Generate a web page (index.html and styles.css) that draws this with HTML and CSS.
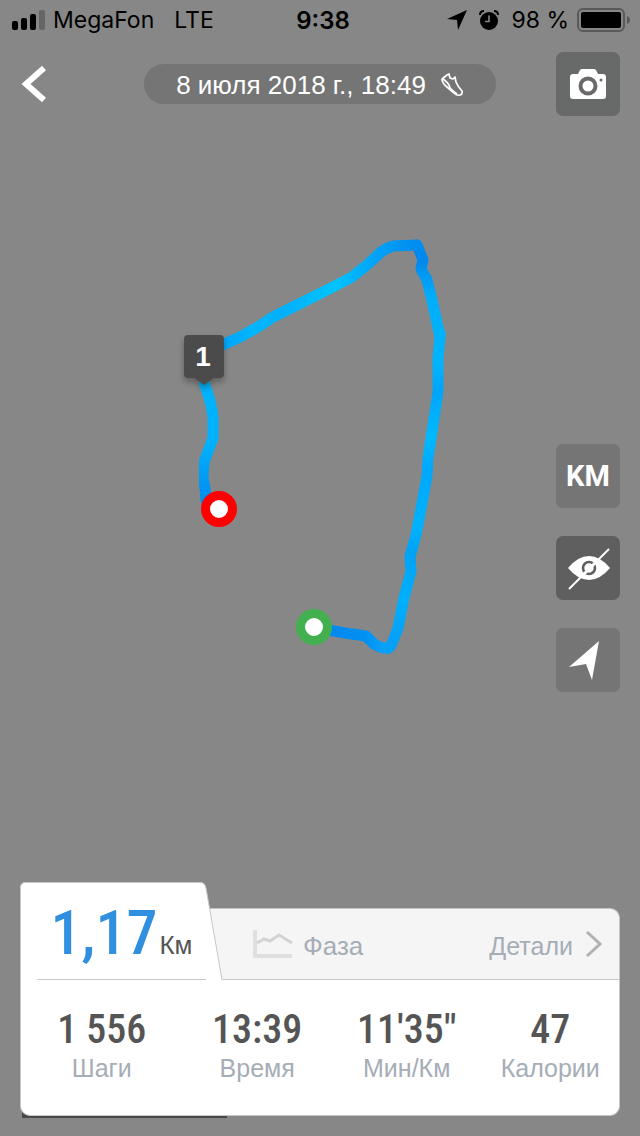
FILE: index.html
```
<!DOCTYPE html>
<html lang="ru">
<head>
    <meta charset="UTF-8">
    <meta name="viewport" content="width=device-width, initial-scale=1.0">
    <title>Тренировка</title>
    <link rel="stylesheet" href="styles.css">
</head>
<body>
    <svg class="map" viewBox="0 0 640 1136" preserveAspectRatio="xMidYMin slice" aria-hidden="true">
        <defs>
            <linearGradient id="east" gradientUnits="userSpaceOnUse" x1="0" y1="650" x2="0" y2="240">
                <stop offset="0" stop-color="#0a9bf5"/>
                <stop offset="0.12" stop-color="#00b0fc"/>
                <stop offset="0.24" stop-color="#00a2f6"/>
                <stop offset="0.3" stop-color="#00b2fc"/>
                <stop offset="0.44" stop-color="#00a8fa"/>
                <stop offset="0.52" stop-color="#00b9ff"/>
                <stop offset="0.63" stop-color="#00a5f8"/>
                <stop offset="0.7" stop-color="#00b4fd"/>
                <stop offset="0.86" stop-color="#00aefb"/>
                <stop offset="0.95" stop-color="#0089ee"/>
                <stop offset="1" stop-color="#008cf0"/>
            </linearGradient>
            <linearGradient id="north" gradientUnits="userSpaceOnUse" x1="418" y1="0" x2="224" y2="0">
                <stop offset="0" stop-color="#008cf0"/>
                <stop offset="0.2" stop-color="#00a0f6"/>
                <stop offset="0.43" stop-color="#00c3ff"/>
                <stop offset="0.7" stop-color="#00b0fc"/>
                <stop offset="0.85" stop-color="#00b6fd"/>
                <stop offset="1" stop-color="#00a5fa"/>
            </linearGradient>
            <linearGradient id="west" gradientUnits="userSpaceOnUse" x1="0" y1="384" x2="0" y2="508">
                <stop offset="0" stop-color="#00b4fd"/>
                <stop offset="0.5" stop-color="#00b0fc"/>
                <stop offset="1" stop-color="#0089ee"/>
            </linearGradient>
            <linearGradient id="start" gradientUnits="userSpaceOnUse" x1="330" y1="0" x2="398" y2="0">
                <stop offset="0" stop-color="#0088ee"/>
                <stop offset="0.5" stop-color="#0090f2"/>
                <stop offset="0.8" stop-color="#0aa0f8"/>
                <stop offset="1" stop-color="#00a2f8"/>
            </linearGradient>
            <filter id="shade" x="-30%" y="-30%" width="160%" height="160%">
                <feDropShadow dx="0" dy="4" stdDeviation="3" flood-opacity="0.3"/>
            </filter>
            <clipPath id="tile"><path d="M199 330h250v330H199z"/></clipPath>
        </defs>
        <g class="route" clip-path="url(#tile)">
            <path stroke="url(#east)" d="M388 648Q391 647 393 641L398 628L404 598L411 571L410 557L416 535L423 498L427 476L428 458L433 425L438 392L438 358L440 337L440 325"/>
            <path stroke="url(#west)" d="M202 378Q212 402 213 418L213 438L204 462L203 478L205 488L206 500L215 508"/>
            <path stroke="url(#start)" d="M328 630L345 633L366 636L374 644Q382 649 389 648"/>
        </g>
        <g class="route">
            <path stroke="url(#east)" d="M440 337L432 300L427 280L421 269L423 260L417 245"/>
            <path stroke="url(#north)" d="M417 245L393 246Q384 249 380 253L367 265L352 277L333 287L303 302L273 317L258 327L240 337L220 346"/>
        </g>
        <g filter="url(#shade)">
            <path fill="#4c4c4c" d="M188 335h32a4 4 0 0 1 4 4v35a4 4 0 0 1-4 4h-6l-10 7-10-7h-6a4 4 0 0 1-4-4v-35a4 4 0 0 1 4-4z"/>
        </g>
        <text class="marker" x="203" y="366">1</text>
        <circle cx="219" cy="509" r="13.5" fill="#fff" stroke="#f00" stroke-width="9"/>
        <circle cx="314" cy="627" r="13.5" fill="#fff" stroke="#43b04f" stroke-width="9"/>
        <path fill="#484848" d="M22 1112h205v6H22z"/>
    </svg>

    <div class="status">
        <div class="carrier">
            <svg width="33" height="20" viewBox="0 0 33 20">
                <rect x="0" y="11" width="6" height="9" rx="2"/>
                <rect x="9" y="8" width="6" height="12" rx="2"/>
                <rect x="18" y="4" width="6" height="16" rx="2"/>
                <rect x="27" y="0" width="6" height="20" rx="2" opacity="0.25"/>
            </svg>
            <span>MegaFon</span>
            <span class="network">LTE</span>
        </div>
        <div class="clock">9:38</div>
        <div class="power">
            <svg width="20" height="20" viewBox="0 0 20 20"><path d="M20 0L11 20L10 10L0 9z"/></svg>
            <svg class="alarm" width="20" height="20" viewBox="0 0 20 20">
                <circle cx="10" cy="11" r="9"/>
                <path d="M1 5Q1 1 5 1M19 5Q19 1 15 1" fill="none" stroke="#000" stroke-width="2"/>
                <path d="M10 5.500v6H6" fill="none" stroke="#878787" stroke-width="1.600"/>
            </svg>
            <span>98 %</span>
            <svg class="battery" width="53" height="24" viewBox="0 0 53 24">
                <rect x="1" y="1" width="46" height="22" rx="5" fill="none" stroke="#5a5a5a" stroke-width="2"/>
                <rect x="4" y="4" width="40" height="16" rx="2"/>
                <path d="M50 8q3 1 3 4t-3 4z" fill="#5a5a5a"/>
            </svg>
        </div>
    </div>

    <header>
        <button class="back" type="button" aria-label="Назад">
            <svg width="28" height="40" viewBox="0 0 28 40"><path d="M24 4L6 20L24 36" fill="none" stroke="#fff" stroke-width="6"/></svg>
        </button>
        <div class="date">
            <span>8 июля 2018 г., 18:49</span>
            <svg width="24" height="24" viewBox="0 0 24 24" fill="none" stroke="#fff" stroke-width="1.700" stroke-linejoin="round">
                <path d="M2 6L7 2L9 1L10 5L13 6L15 4L16 9Q18 14 22 18Q23 21 20 22Q17 23 14 20L7 14Q2 10 2 6z"/>
                <path d="M3 6Q9 10 10 15Q14 19 17 21"/>
            </svg>
        </div>
        <button class="tool camera" type="button" aria-label="Камера">
            <svg width="38" height="32" viewBox="0 0 38 32">
                <path fill="#fff" d="M4 6h5l2-4q1-1 2-1h12q1 0 2 1l2 4h5q3 0 3 3v19q0 3-3 3H4q-3 0-3-3V9q0-3 3-3z"/>
                <circle cx="19" cy="18" r="7.500" fill="#fff" stroke="#686a69" stroke-width="4"/>
                <circle cx="32" cy="12" r="1.500" fill="#686a69"/>
            </svg>
        </button>
    </header>

    <main>
        <button class="tool" type="button">KM</button>
        <button class="tool active" type="button" aria-label="Скрыть карту">
            <svg width="44" height="44" viewBox="0 0 44 44">
                <path fill="#fff" d="M2 22Q12 10 23 10T44 22Q34 34 23 34T2 22z"/>
                <circle cx="23" cy="22" r="6" fill="none" stroke="#5f5f5f" stroke-width="2.600"/>
                <path d="M15 31L31 15" stroke="#fff" stroke-width="3"/>
                <path d="M3 43L43 3" stroke="#fff" stroke-width="2"/>
            </svg>
        </button>
        <button class="tool" type="button" aria-label="Моё местоположение">
            <svg width="40" height="40" viewBox="0 0 40 40"><path fill="#fff" d="M31 1L24 40L18 24L1 27z"/></svg>
        </button>
    </main>

    <section class="card">
        <div class="tabs">
            <div class="distance">
                <svg class="shape" width="204" height="98" viewBox="0 0 204 98">
                    <path fill="#fff" d="M0 98V6Q0 0 6 0H180Q185 0 186 6L202 98z"/>
                    <path fill="none" stroke="#c4c6c8" d="M0.500 98V6Q0.500 0.500 6 0.500H180Q185 0.500 186 6L202 97.500H204"/>
                </svg>
                <p><strong>1,17</strong><span>Км</span></p>
            </div>
            <nav>
                <a class="phase" href="#">
                    <svg width="40" height="30" viewBox="0 0 40 30" fill="none">
                        <path d="M2 1V27H39" stroke="#dedfe0" stroke-width="4"/>
                        <path d="M4 14L11 10L17 12L26 6L39 14" stroke="#d2d3d4" stroke-width="3"/>
                    </svg>
                    <span>Фаза</span>
                </a>
                <a class="details" href="#">
                    <span>Детали</span>
                    <svg width="18" height="28" viewBox="0 0 18 28"><path d="M2 2L15 14L2 26" fill="none" stroke="#b2b2b2" stroke-width="3"/></svg>
                </a>
            </nav>
        </div>
        <dl class="stats">
            <div><dt>Шаги</dt><dd>1 556</dd></div>
            <div><dt>Время</dt><dd>13:39</dd></div>
            <div><dt>Мин/Км</dt><dd>11'35"</dd></div>
            <div><dt>Калории</dt><dd>47</dd></div>
        </dl>
    </section>
</body>
</html>
```

FILE: styles.css
```
* {
    box-sizing: border-box;
}

body {
    position: relative;
    display: flex;
    flex-direction: column;
    min-height: 100vh;
    margin: 0;
    background: #878787;
    color: #555;
    font-family: "Liberation Sans", Arial, sans-serif;
}

svg {
    display: block;
    flex-shrink: 0;
}

button {
    padding: 0;
    border: none;
    background: none;
    cursor: pointer;
}

a {
    color: inherit;
    text-decoration: none;
}

/* route over the whole screen */
.map {
    position: absolute;
    top: 0;
    left: 0;
    z-index: -1;
    width: 100%;
    height: 100%;
}

.route path {
    fill: none;
    stroke-width: 11;
    stroke-linecap: round;
    stroke-linejoin: round;
}

.marker {
    fill: #fff;
    font-size: 28px;
    font-weight: bold;
    text-anchor: middle;
}

/* status bar */
.status {
    display: grid;
    grid-template-columns: 1fr auto 1fr;
    align-items: center;
    height: 40px;
    padding: 0 10px 0 12px;
    color: #000;
    font-family: Inter, sans-serif;
    font-size: 24px;
}

.carrier,
.power {
    display: flex;
    align-items: center;
    gap: 8px;
    font-size: 23px;
}

.network {
    margin-left: 12px;
}

.clock {
    padding-left: 4px;
    font-weight: 600;
}

.power {
    justify-content: flex-end;
}

.alarm {
    margin: 0 4px;
}

/* header */
header {
    display: flex;
    align-items: center;
    justify-content: space-between;
    padding: 12px 20px 0;
}

.back {
    width: 64px;
}

.date {
    display: flex;
    align-items: center;
    gap: 14px;
    height: 40px;
    padding: 2px 32px 0;
    border-radius: 20px;
    background: #757575;
    color: #fff;
    font-size: 26px;
}

.tool {
    display: flex;
    align-items: center;
    justify-content: center;
    width: 64px;
    height: 64px;
    border-radius: 7px;
    background: #757575;
    color: #fff;
    font-family: Roboto, sans-serif;
    font-size: 29px;
    font-weight: bold;
}

.camera {
    background: #686a69;
}

.active {
    background: #5f5f5f;
}

main {
    display: flex;
    flex: 1;
    flex-direction: column;
    align-items: flex-end;
    justify-content: flex-end;
    gap: 28px;
    padding: 20px 20px 190px;
}

/* summary card */
.card {
    margin: 0 20px 20px;
}

.tabs {
    display: flex;
    align-items: flex-end;
}

.distance {
    position: relative;
    z-index: 1;
    width: 204px;
    height: 98px;
    padding-left: 17px;
}

.shape {
    position: absolute;
    top: 0;
    left: 0;
    z-index: -1;
}

.distance p {
    display: flex;
    align-items: baseline;
    justify-content: center;
    gap: 2px;
    width: 169px;
    height: 98px;
    margin: 0;
    padding-top: 16px;
    border-bottom: 1px solid #c9c9c9;
    line-height: 70px;
}

.distance strong {
    color: #318fe0;
    font-family: "Roboto Condensed", "Liberation Sans Narrow", sans-serif;
    font-size: 62px;
    font-weight: 500;
}

.distance span {
    font-size: 26px;
}

nav {
    display: flex;
    flex: 1;
    align-items: center;
    justify-content: space-between;
    height: 72px;
    margin-left: -20px;
    padding: 4px 16px 0 49px;
    border: 1px solid #c4c6c8;
    border-left: none;
    border-radius: 0 10px 0 0;
    background: #f5f5f5;
    color: #a5adb6;
    font-size: 25px;
}

.phase,
.details {
    display: flex;
    align-items: center;
    gap: 10px;
}

.phase {
    font-size: 26px;
}

.phase svg,
.details svg {
    margin-bottom: 4px;
}

.details {
    gap: 12px;
}

.stats {
    display: grid;
    grid-template-columns: 162fr 150fr 150fr 138fr;
    margin: 0;
    padding: 28px 0 31px;
    border: 1px solid #c4c6c8;
    border-top: none;
    border-radius: 0 0 10px 10px;
    background: #fff;
    text-align: center;
}

.stats div {
    display: flex;
    flex-direction: column-reverse;
}

.stats dd {
    margin: 0;
    color: #555;
    font-family: "Roboto Condensed", "Liberation Sans Narrow", sans-serif;
    font-size: 40px;
    font-weight: 500;
    line-height: 44px;
}

.stats dt {
    color: #a5adb6;
    font-size: 25px;
    line-height: 32px;
}
```
